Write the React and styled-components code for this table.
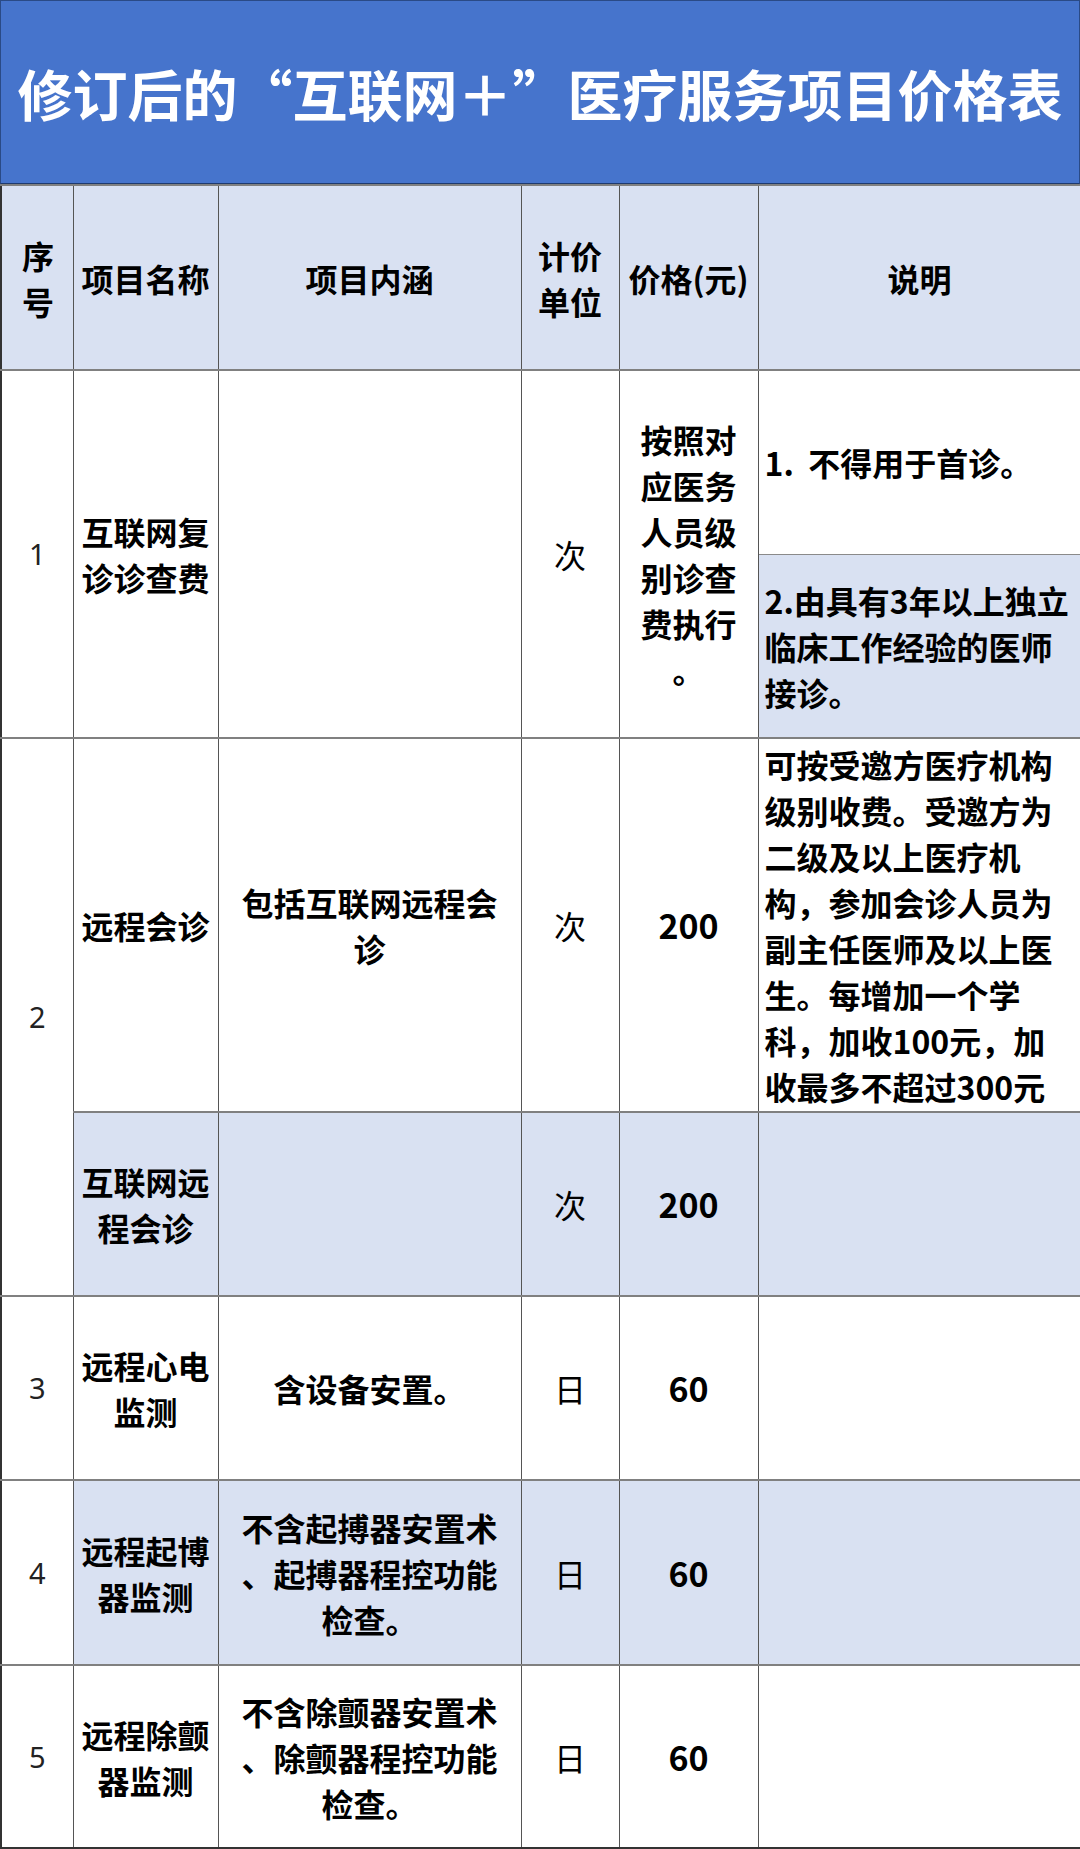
import styled, { createGlobalStyle } from "styled-components";

const GlobalStyle = createGlobalStyle`
  html, body {
    margin: 0;
    padding: 0;
    background: #ffffff;
  }
  body {
    font-family: "Noto Sans CJK SC", "Noto Sans", sans-serif;
  }
`;

const Page = styled.div`
  width: 1080px;
  background: #ffffff;
`;

const TitleBar = styled.div`
  height: 182px;
  display: flex;
  align-items: center;
  justify-content: center;
  background: #4674cc;
  border: 1px solid #2a4a86;
  border-bottom: 1px solid #1f3a6e;
  color: #ffffff;
  font-size: 55px;
  font-weight: 700;
  white-space: nowrap;
`;

const Table = styled.table`
  width: 1080px;
  table-layout: fixed;
  border-collapse: collapse;
  border-left: 2px solid #333333;
  border-bottom: 2px solid #333333;
  color: #000000;
`;

const Row = styled.tr`
  height: ${(p) => p.$h}px;
`;

const Cell = styled.td`
  padding: 0 ${(p) => p.$pad ?? 6}px;
  border-left: 1px solid #555555;
  border-right: 1px solid #555555;
  border-top: ${(p) => (p.$thin ? "1px solid #8a8a8a" : "2px solid #808080")};
  background: ${(p) => (p.$blue ? "#d9e1f2" : "#ffffff")};
  text-align: ${(p) => p.$align || "center"};
  vertical-align: middle;
  font-family: "Noto Sans CJK SC", sans-serif;
  font-size: 32px;
  line-height: 46px;
  font-weight: ${(p) => (p.$light ? 400 : 700)};
  word-break: break-all;
  line-break: ${(p) => (p.$loose ? "anywhere" : "auto")};
`;

const IndexCell = styled(Cell)`
  font-family: "Noto Sans", "Liberation Sans", sans-serif;
  font-size: 29px;
  font-weight: 400;
  color: #222222;
`;

const PriceCell = styled(Cell)`
  font-size: ${(p) => (p.$num ? 34 : 32)}px;
`;

const cols = [72, 145, 303, 98, 139, 323];

export default function App() {
  return (
    <Page>
      <GlobalStyle />
      <TitleBar>修订后的“互联网＋”医疗服务项目价格表</TitleBar>
      <Table>
        <colgroup>
          {cols.map((w, i) => (
            <col key={i} style={{ width: w }} />
          ))}
        </colgroup>
        <tbody>
          <Row $h={185}>
            <Cell $blue $pad={20}>序号</Cell>
            <Cell $blue $pad={7}>项目名称</Cell>
            <Cell $blue>项目内涵</Cell>
            <Cell $blue $pad={4}>计价单位</Cell>
            <Cell $blue $pad={2}>价格(元)</Cell>
            <Cell $blue>说明</Cell>
          </Row>

          <Row $h={184}>
            <IndexCell rowSpan={2}>1</IndexCell>
            <Cell rowSpan={2} $pad={7}>互联网复诊诊查费</Cell>
            <Cell rowSpan={2} />
            <Cell rowSpan={2} $light>次</Cell>
            <PriceCell rowSpan={2} $pad={6} $loose>
              按照对应医务人员级别诊查费执行。
            </PriceCell>
            <Cell $align="left">1.&nbsp;&nbsp;不得用于首诊。</Cell>
          </Row>
          <Row $h={184}>
            <Cell $blue $thin $align="left">
              2.由具有3年以上独立临床工作经验的医师接诊。
            </Cell>
          </Row>

          <Row $h={374}>
            <IndexCell rowSpan={2}>2</IndexCell>
            <Cell $pad={7}>远程会诊</Cell>
            <Cell $pad={20}>包括互联网远程会诊</Cell>
            <Cell $light>次</Cell>
            <PriceCell $num>200</PriceCell>
            <Cell $align="left">
              可按受邀方医疗机构级别收费。受邀方为二级及以上医疗机构，参加会诊人员为副主任医师及以上医生。每增加一个学科，加收100元，加收最多不超过300元
            </Cell>
          </Row>
          <Row $h={184}>
            <Cell $blue $pad={7}>互联网远程会诊</Cell>
            <Cell $blue />
            <Cell $blue $light>次</Cell>
            <PriceCell $blue $num>200</PriceCell>
            <Cell $blue />
          </Row>

          <Row $h={184}>
            <IndexCell>3</IndexCell>
            <Cell $pad={7}>远程心电监测</Cell>
            <Cell $pad={20}>含设备安置。</Cell>
            <Cell $light>日</Cell>
            <PriceCell $num>60</PriceCell>
            <Cell />
          </Row>

          <Row $h={185}>
            <IndexCell>4</IndexCell>
            <Cell $blue $pad={7}>远程起博器监测</Cell>
            <Cell $blue $pad={20} $loose>
              不含起搏器安置术、起搏器程控功能检查。
            </Cell>
            <Cell $blue $light>日</Cell>
            <PriceCell $blue $num>60</PriceCell>
            <Cell $blue />
          </Row>

          <Row $h={183}>
            <IndexCell>5</IndexCell>
            <Cell $pad={7}>远程除颤器监测</Cell>
            <Cell $pad={20} $loose>
              不含除颤器安置术、除颤器程控功能检查。
            </Cell>
            <Cell $light>日</Cell>
            <PriceCell $num>60</PriceCell>
            <Cell />
          </Row>
        </tbody>
      </Table>
    </Page>
  );
}
